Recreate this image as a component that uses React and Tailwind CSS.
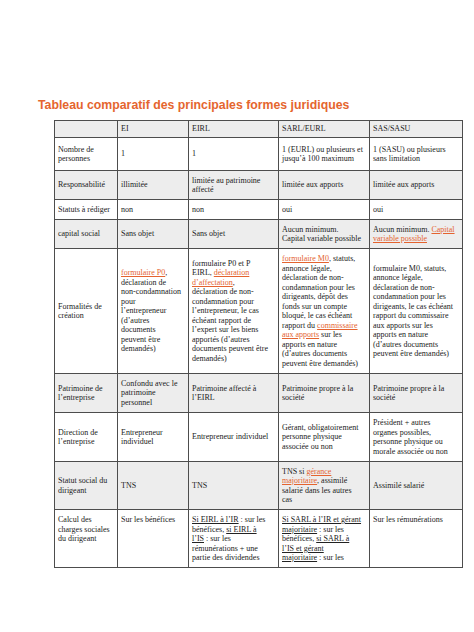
import React from "react";

const L = ({ children }) => (
  <span className="text-[#e4632f] underline">{children}</span>
);
const U = ({ children }) => <span className="underline">{children}</span>;

// each cell = list of lines
const rows = [
  {
    h: "h-[17px]",
    bg: "bg-[#ededed]",
    cells: [[""], ["EI"], ["EIRL"], ["SARL/EURL"], ["SAS/SASU"]],
  },
  {
    h: "h-[33px]",
    bg: "bg-white",
    cells: [
      ["Nombre de", "personnes"],
      ["1"],
      ["1"],
      ["1 (EURL) ou plusieurs et", "jusqu’à 100 maximum"],
      ["1 (SASU) ou plusieurs", "sans limitation"],
    ],
  },
  {
    h: "h-[29px]",
    bg: "bg-[#ededed]",
    cells: [
      ["Responsabilité"],
      ["illimitée"],
      ["limitée au patrimoine", "affecté"],
      ["limitée aux apports"],
      ["limitée aux apports"],
    ],
  },
  {
    h: "h-[20px]",
    bg: "bg-white",
    cells: [["Statuts à rédiger"], ["non"], ["non"], ["oui"], ["oui"]],
  },
  {
    h: "h-[29px]",
    bg: "bg-[#ededed]",
    cells: [
      ["capital social"],
      ["Sans objet"],
      ["Sans objet"],
      ["Aucun minimum.", "Capital variable possible"],
      [
        <>
          Aucun minimum. <L>Capital</L>
        </>,
        <L>variable possible</L>,
      ],
    ],
  },
  {
    h: "h-[125px]",
    bg: "bg-white",
    cells: [
      ["Formalités de", "création"],
      [
        <>
          <L>formulaire P0</L>,
        </>,
        "déclaration de",
        "non-condamnation",
        "pour",
        "l’entrepreneur",
        "(d’autres",
        "documents",
        "peuvent être",
        "demandés)",
      ],
      [
        "formulaire P0 et P",
        <>
          EIRL, <L>déclaration</L>
        </>,
        <>
          <L>d’affectation</L>,
        </>,
        "déclaration de non-",
        "condamnation pour",
        "l’entrepreneur, le cas",
        "échéant rapport de",
        "l’expert sur les biens",
        "apportés (d’autres",
        "documents peuvent être",
        "demandés)",
      ],
      [
        <>
          <L>formulaire M0</L>, statuts,
        </>,
        "annonce légale,",
        "déclaration de non-",
        "condamnation pour les",
        "dirigeants, dépôt des",
        "fonds sur un compte",
        "bloqué, le cas échéant",
        <>
          rapport du <L>commissaire</L>
        </>,
        <>
          <L>aux apports</L> sur les
        </>,
        "apports en nature",
        "(d’autres documents",
        "peuvent être demandés)",
      ],
      [
        "formulaire M0, statuts,",
        "annonce légale,",
        "déclaration de non-",
        "condamnation pour les",
        "dirigeants, le cas échéant",
        "rapport du commissaire",
        "aux apports sur les",
        "apports en nature",
        "(d’autres documents",
        "peuvent être demandés)",
      ],
    ],
  },
  {
    h: "h-[39px]",
    bg: "bg-[#ededed]",
    cells: [
      ["Patrimoine de", "l’entreprise"],
      ["Confondu avec le", "patrimoine", "personnel"],
      ["Patrimoine affecté à", "l’EIRL"],
      ["Patrimoine propre à la", "société"],
      ["Patrimoine propre à la", "société"],
    ],
  },
  {
    h: "h-[49px]",
    bg: "bg-white",
    cells: [
      ["Direction de", "l’entreprise"],
      ["Entrepreneur", "individuel"],
      ["Entrepreneur individuel"],
      ["Gérant, obligatoirement", "personne physique", "associée ou non"],
      [
        "Président + autres",
        "organes possibles,",
        "personne physique ou",
        "morale associée ou non",
      ],
    ],
  },
  {
    h: "h-[48px]",
    bg: "bg-[#ededed]",
    cells: [
      ["Statut social du", "dirigeant"],
      ["TNS"],
      ["TNS"],
      [
        <>
          TNS si <L>gérance</L>
        </>,
        <>
          <L>majoritaire</L>, assimilé
        </>,
        "salarié dans les autres",
        "cas",
      ],
      ["Assimilé salarié"],
    ],
  },
  {
    h: "h-[58px]",
    bg: "bg-white",
    top: true,
    cells: [
      ["Calcul des", "charges sociales", "du dirigeant"],
      ["Sur les bénéfices"],
      [
        <>
          <U>Si EIRL à l’IR</U> : sur les
        </>,
        <>
          bénéfices, <U>si EIRL à</U>
        </>,
        <>
          <U>l’IS</U> : sur les
        </>,
        "rémunérations + une",
        "partie des dividendes",
      ],
      [
        <U>Si SARL à l’IR et gérant</U>,
        <>
          <U>majoritaire</U> : sur les
        </>,
        <>
          bénéfices, <U>si SARL à</U>
        </>,
        <U>l’IS et gérant</U>,
        <>
          <U>majoritaire</U> : sur les
        </>,
      ],
      ["Sur les rémunérations"],
    ],
  },
];

export default function App() {
  return (
    <div className="w-[474px] h-[632px] bg-white overflow-hidden flex flex-col pt-[97px]">
      <h1 className="pl-[38px] text-[12.3px] leading-[16px] font-bold text-[#e5652e] font-['Liberation_Sans',Arial,sans-serif]">
        Tableau comparatif des principales formes juridiques
      </h1>

      <div className="pl-[54px] mt-[7px]">
        <table className="table-fixed border-collapse w-[408px] font-['Liberation_Serif','Times_New_Roman',serif] text-[8px] leading-[9.5px] text-[#222]">
          <colgroup>
            <col className="w-[63px]" />
            <col className="w-[71px]" />
            <col className="w-[90px]" />
            <col className="w-[91px]" />
            <col className="w-[93px]" />
          </colgroup>
          <tbody>
            {rows.map((r, i) => (
              <tr key={i} className={`${r.h} ${r.bg}`}>
                {r.cells.map((lines, j) => (
                  <td
                    key={j}
                    className={`border border-[#4d4d4d] px-[3px] ${
                      r.top ? "align-top pt-[5px]" : "align-middle py-0"
                    }`}
                  >
                    {lines.map((ln, k) => (
                      <div key={k} className="whitespace-nowrap">
                        {ln}
                      </div>
                    ))}
                  </td>
                ))}
              </tr>
            ))}
          </tbody>
        </table>
      </div>
    </div>
  );
}
